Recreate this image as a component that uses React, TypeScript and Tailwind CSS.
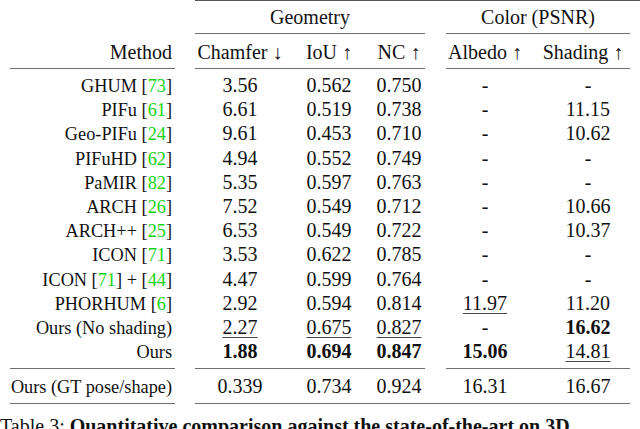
import React from "react"

type Cell = { v: string; b?: boolean; u?: boolean }
type Row = { name: string; refs?: string[]; cells: Cell[] }

const c = (v: string, flag?: "b" | "u"): Cell => ({ v, b: flag === "b", u: flag === "u" })

const rows: Row[] = [
  { name: "GHUM", refs: ["73"], cells: [c("3.56"), c("0.562"), c("0.750"), c("-"), c("-")] },
  { name: "PIFu", refs: ["61"], cells: [c("6.61"), c("0.519"), c("0.738"), c("-"), c("11.15")] },
  { name: "Geo-PIFu", refs: ["24"], cells: [c("9.61"), c("0.453"), c("0.710"), c("-"), c("10.62")] },
  { name: "PIFuHD", refs: ["62"], cells: [c("4.94"), c("0.552"), c("0.749"), c("-"), c("-")] },
  { name: "PaMIR", refs: ["82"], cells: [c("5.35"), c("0.597"), c("0.763"), c("-"), c("-")] },
  { name: "ARCH", refs: ["26"], cells: [c("7.52"), c("0.549"), c("0.712"), c("-"), c("10.66")] },
  { name: "ARCH++", refs: ["25"], cells: [c("6.53"), c("0.549"), c("0.722"), c("-"), c("10.37")] },
  { name: "ICON", refs: ["71"], cells: [c("3.53"), c("0.622"), c("0.785"), c("-"), c("-")] },
  { name: "ICON", refs: ["71", "44"], cells: [c("4.47"), c("0.599"), c("0.764"), c("-"), c("-")] },
  { name: "PHORHUM", refs: ["6"], cells: [c("2.92"), c("0.594"), c("0.814"), c("11.97", "u"), c("11.20")] },
  { name: "Ours (No shading)", cells: [c("2.27", "u"), c("0.675", "u"), c("0.827", "u"), c("-"), c("16.62", "b")] },
  { name: "Ours", cells: [c("1.88", "b"), c("0.694", "b"), c("0.847", "b"), c("15.06", "b"), c("14.81", "u")] },
]

const gt: Row = { name: "Ours (GT pose/shape)", cells: [c("0.339"), c("0.734"), c("0.924"), c("16.31"), c("16.67")] }

// column boxes, left to right after the method column
const colW = ["w-[90px]", "w-[88px]", "w-[52px]", "w-[78px]", "w-[96px]"]

function Ref({ n }: { n: string }) {
  return (
    <span>
      [<span className="text-[#14d414]">{n}</span>]
    </span>
  )
}

function Value({ cell, w }: { cell: Cell; w: string }) {
  return (
    <div className={`${w} shrink-0 text-center`}>
      <span
        className={
          (cell.b ? "font-bold " : "") +
          (cell.u ? "underline decoration-1 underline-offset-[3px] decoration-[#444]" : "")
        }
      >
        {cell.v}
      </span>
    </div>
  )
}

function DataRow({ row }: { row: Row }) {
  return (
    <div className="flex items-baseline h-[24.24px] leading-[24.24px] whitespace-nowrap">
      <div className="ml-[10px] w-[165px] shrink-0 pr-[3px] text-right text-[18.3px]">
        {row.name}
        {row.refs && (
          <>
            {" "}
            <Ref n={row.refs[0]} />
          </>
        )}
        {row.refs && row.refs[1] && (
          <>
            {" + "}
            <Ref n={row.refs[1]} />
          </>
        )}
      </div>
      <div className="w-[20px] shrink-0" />
      <Value cell={row.cells[0]} w={colW[0]} />
      <Value cell={row.cells[1]} w={colW[1]} />
      <Value cell={row.cells[2]} w={colW[2]} />
      <div className="w-[21px] shrink-0" />
      <Value cell={row.cells[3]} w={colW[3]} />
      <div className="w-[16px] shrink-0" />
      <Value cell={row.cells[4]} w={colW[4]} />
    </div>
  )
}

function Rule({ split }: { split: boolean }) {
  return (
    <div className="flex h-px">
      <div className="ml-[10px] w-[165px] bg-[#707070]" />
      <div className="w-[20px]" />
      {split ? (
        <>
          <div className="w-[230px] bg-[#707070]" />
          <div className="w-[21px]" />
          <div className="w-[184px] bg-[#707070]" />
        </>
      ) : (
        <div className="w-[435px] bg-[#707070]" />
      )}
    </div>
  )
}

export default function App() {
  return (
    <div className="w-[640px] h-[429px] overflow-hidden bg-white text-[#111] text-[20px] [font-family:Liberation_Serif]">
      {/* top rule */}
      <div className="flex h-px">
        <div className="w-[195px]" />
        <div className="flex-1 bg-[#555]" />
      </div>
      {/* group header */}
      <div className="flex h-[32px] pt-[4px] leading-[24.24px]">
        <div className="w-[195px] shrink-0" />
        <div className="w-[230px] shrink-0 text-center">Geometry</div>
        <div className="w-[21px] shrink-0" />
        <div className="w-[184px] shrink-0 text-center">Color (PSNR)</div>
      </div>
      <div className="flex h-px">
        <div className="w-[195px]" />
        <div className="w-[230px] bg-[#707070]" />
        <div className="w-[21px]" />
        <div className="w-[184px] bg-[#707070]" />
      </div>
      {/* column header */}
      <div className="flex h-[34px] pt-[6px] leading-[24.24px] whitespace-nowrap">
        <div className="ml-[10px] w-[165px] shrink-0 pr-[3px] text-right">Method</div>
        <div className="w-[20px] shrink-0" />
        <div className={`${colW[0]} shrink-0 text-center`}>Chamfer ↓</div>
        <div className={`${colW[1]} shrink-0 text-center`}>IoU ↑</div>
        <div className={`${colW[2]} shrink-0 text-center`}>NC ↑</div>
        <div className="w-[21px] shrink-0" />
        <div className="w-[78px] shrink-0 text-center">Albedo ↑</div>
        <div className="w-[6px] shrink-0" />
        <div className="w-[106px] shrink-0 text-center">Shading ↑</div>
      </div>
      <Rule split />
      <div className="pt-[3.8px] pb-[4.1px]">
        {rows.map((r, i) => (
          <DataRow key={i} row={r} />
        ))}
      </div>
      <Rule split />
      <div className="pt-[4.8px] pb-[5px]">
        <DataRow row={gt} />
      </div>
      <Rule split={false} />
      <div className="mt-[12.5px] leading-none whitespace-nowrap">
        Table 3: <span className="font-bold">Quantitative comparison against the state-of-the-art on 3D</span>
      </div>
    </div>
  )
}
